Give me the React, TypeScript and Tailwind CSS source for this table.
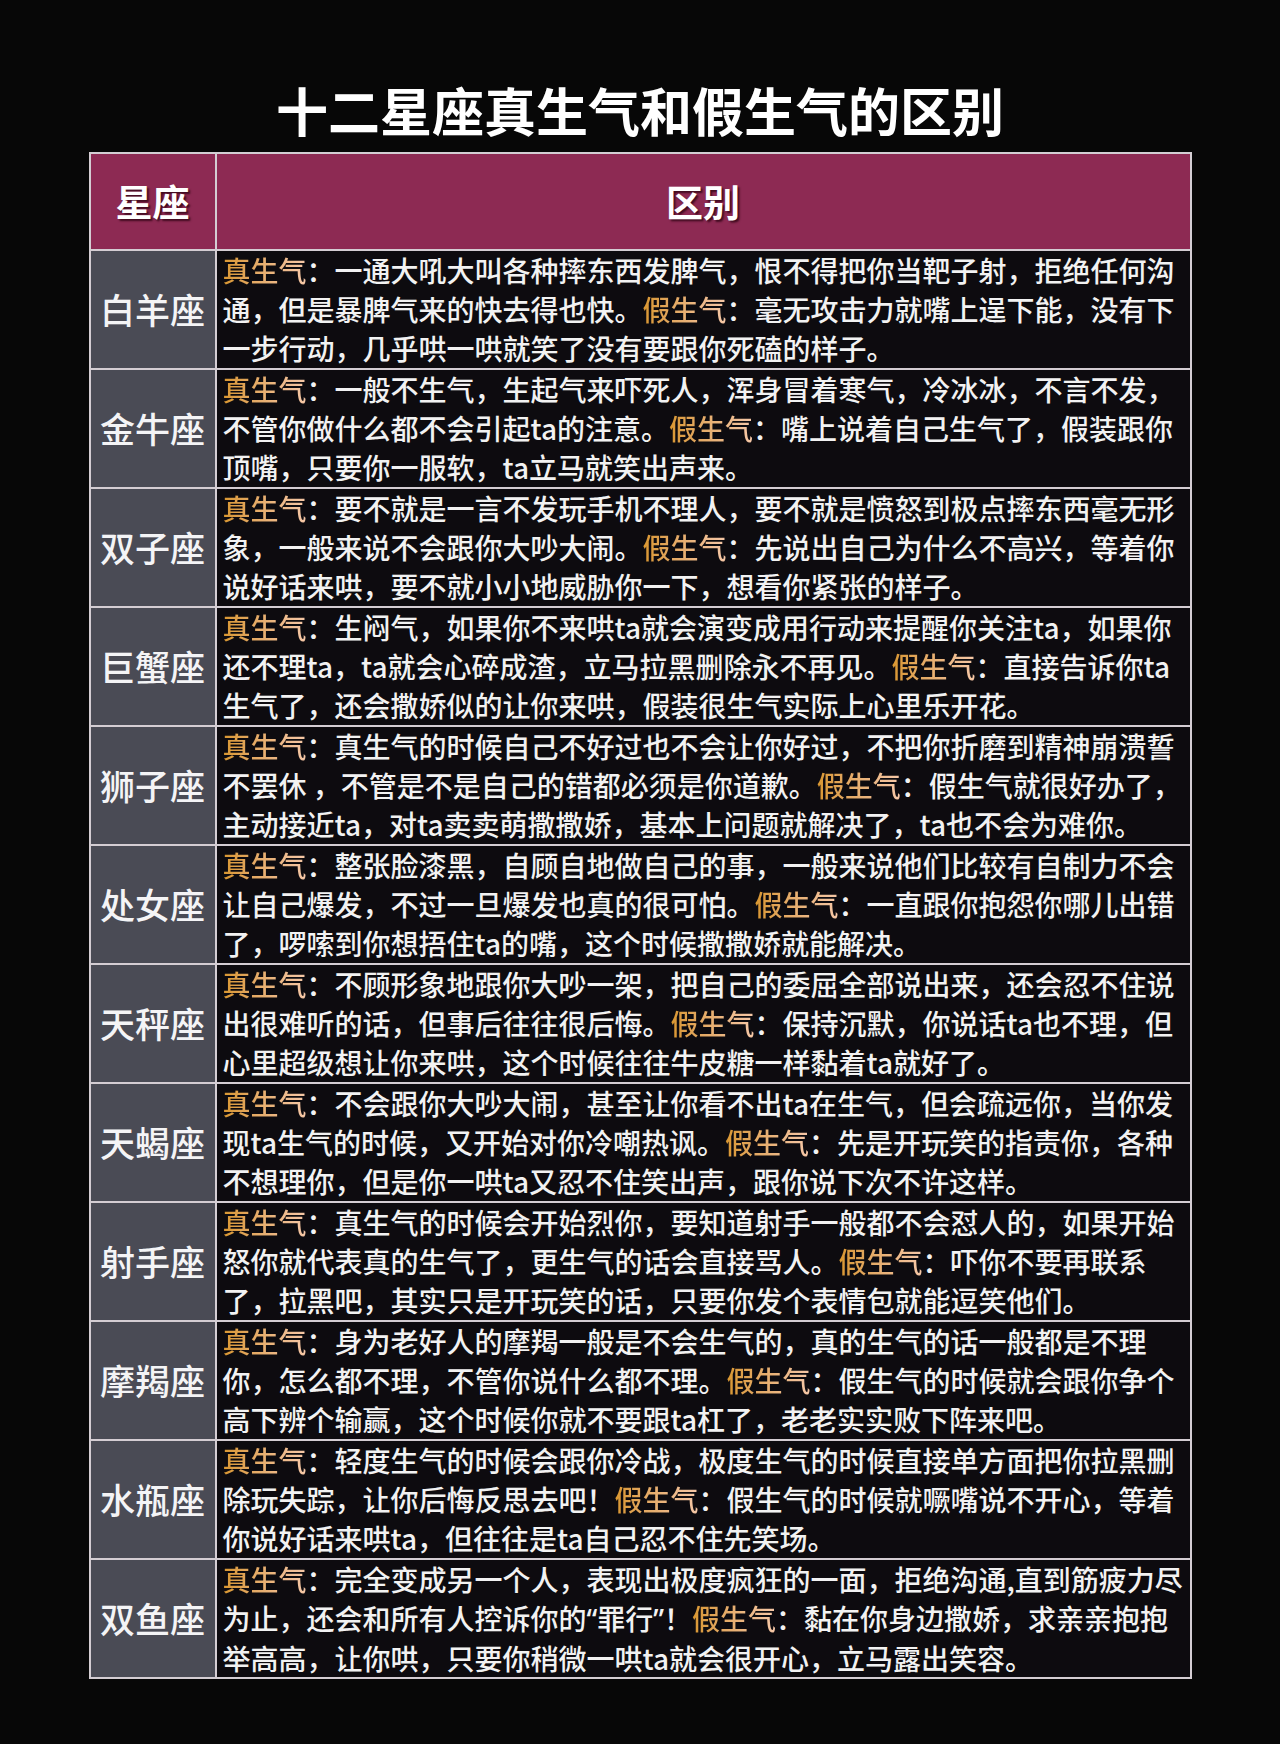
import type { ReactElement } from 'react'

type SignRow = {
  name: string
  lines: string[]
}

const SIGNS: SignRow[] = [
  {
    name: '白羊座',
    lines: [
      '真生气：一通大吼大叫各种摔东西发脾气，恨不得把你当靶子射，拒绝任何沟',
      '通，但是暴脾气来的快去得也快。假生气：毫无攻击力就嘴上逞下能，没有下',
      '一步行动，几乎哄一哄就笑了没有要跟你死磕的样子。'
    ]
  },
  {
    name: '金牛座',
    lines: [
      '真生气：一般不生气，生起气来吓死人，浑身冒着寒气，冷冰冰，不言不发，',
      '不管你做什么都不会引起ta的注意。假生气：嘴上说着自己生气了，假装跟你',
      '顶嘴，只要你一服软，ta立马就笑出声来。'
    ]
  },
  {
    name: '双子座',
    lines: [
      '真生气：要不就是一言不发玩手机不理人，要不就是愤怒到极点摔东西毫无形',
      '象，一般来说不会跟你大吵大闹。假生气：先说出自己为什么不高兴，等着你',
      '说好话来哄，要不就小小地威胁你一下，想看你紧张的样子。'
    ]
  },
  {
    name: '巨蟹座',
    lines: [
      '真生气：生闷气，如果你不来哄ta就会演变成用行动来提醒你关注ta，如果你',
      '还不理ta，ta就会心碎成渣，立马拉黑删除永不再见。假生气：直接告诉你ta',
      '生气了，还会撒娇似的让你来哄，假装很生气实际上心里乐开花。'
    ]
  },
  {
    name: '狮子座',
    lines: [
      '真生气：真生气的时候自己不好过也不会让你好过，不把你折磨到精神崩溃誓',
      '不罢休 ，不管是不是自己的错都必须是你道歉。假生气：假生气就很好办了，',
      '主动接近ta，对ta卖卖萌撒撒娇，基本上问题就解决了，ta也不会为难你。'
    ]
  },
  {
    name: '处女座',
    lines: [
      '真生气：整张脸漆黑，自顾自地做自己的事，一般来说他们比较有自制力不会',
      '让自己爆发，不过一旦爆发也真的很可怕。假生气：一直跟你抱怨你哪儿出错',
      '了，啰嗦到你想捂住ta的嘴，这个时候撒撒娇就能解决。'
    ]
  },
  {
    name: '天秤座',
    lines: [
      '真生气：不顾形象地跟你大吵一架，把自己的委屈全部说出来，还会忍不住说',
      '出很难听的话，但事后往往很后悔。假生气：保持沉默，你说话ta也不理，但',
      '心里超级想让你来哄，这个时候往往牛皮糖一样黏着ta就好了。'
    ]
  },
  {
    name: '天蝎座',
    lines: [
      '真生气：不会跟你大吵大闹，甚至让你看不出ta在生气，但会疏远你，当你发',
      '现ta生气的时候，又开始对你冷嘲热讽。假生气：先是开玩笑的指责你，各种',
      '不想理你，但是你一哄ta又忍不住笑出声，跟你说下次不许这样。'
    ]
  },
  {
    name: '射手座',
    lines: [
      '真生气：真生气的时候会开始烈你，要知道射手一般都不会怼人的，如果开始',
      '怒你就代表真的生气了，更生气的话会直接骂人。假生气：吓你不要再联系',
      '了，拉黑吧，其实只是开玩笑的话，只要你发个表情包就能逗笑他们。'
    ]
  },
  {
    name: '摩羯座',
    lines: [
      '真生气：身为老好人的摩羯一般是不会生气的，真的生气的话一般都是不理',
      '你，怎么都不理，不管你说什么都不理。假生气：假生气的时候就会跟你争个',
      '高下辨个输赢，这个时候你就不要跟ta杠了，老老实实败下阵来吧。'
    ]
  },
  {
    name: '水瓶座',
    lines: [
      '真生气：轻度生气的时候会跟你冷战，极度生气的时候直接单方面把你拉黑删',
      '除玩失踪，让你后悔反思去吧！假生气：假生气的时候就噘嘴说不开心，等着',
      '你说好话来哄ta，但往往是ta自己忍不住先笑场。'
    ]
  },
  {
    name: '双鱼座',
    lines: [
      '真生气：完全变成另一个人，表现出极度疯狂的一面，拒绝沟通,直到筋疲力尽',
      '为止，还会和所有人控诉你的“罪行”！假生气：黏在你身边撒娇，求亲亲抱抱',
      '举高高，让你哄，只要你稍微一哄ta就会很开心，立马露出笑容。'
    ]
  }
]

// curly quotes are narrow in the picture, so they get a latin font
function renderPlain(text: string, key: number): ReactElement {
  return (
    <span key={key}>
      {text.split(/([“”])/u).map((piece, index) =>
        index % 2 === 1 ? (
          <span key={index} className="font-['Noto_Sans',sans-serif]">
            {piece}
          </span>
        ) : (
          piece
        )
      )}
    </span>
  )
}

// only the label right before a colon gets the gold colour
function renderLine(line: string): ReactElement[] {
  return line.split(/((?:真|假)生气(?=：))/u).map((part, index) =>
    index % 2 === 1 ? (
      <span
        key={index}
        className="bg-linear-to-r from-[#d9972f] to-[#f6c8a8] bg-clip-text text-transparent"
      >
        {part}
      </span>
    ) : (
      renderPlain(part, index)
    )
  )
}

function SignRowCells({ sign }: { sign: SignRow }): ReactElement {
  return (
    <>
      <div className="flex h-[117px] items-center justify-center bg-[#4a4b55] text-[35px] font-medium text-[#f4f4f6]">
        {sign.name}
      </div>
      <div className="flex h-[117px] flex-col overflow-hidden bg-[#0d0b0f] pl-[6px] text-[28px] font-medium leading-[39px] text-[#f2f2f2]">
        {sign.lines.map((line, index) => (
          <div key={index} className="whitespace-nowrap">
            {renderLine(line)}
          </div>
        ))}
      </div>
    </>
  )
}

export default function App(): ReactElement {
  return (
    <div className="min-h-[1744px] bg-[#070707] pt-[84px] font-['Noto_Sans_CJK_SC','Noto_Sans',sans-serif]">
      <h1 className="mb-[16px] h-[52px] text-center text-[52px] font-bold leading-none text-white">
        十二星座真生气和假生气的区别
      </h1>

      <div className="mx-auto grid w-[1103px] grid-cols-[124px_1fr] gap-[2px] bg-[#d4cdd3] p-[2px]">
        <div className="flex h-[95px] items-center justify-center bg-[#8d2a53] text-[37px] font-bold text-white [text-shadow:2px_2px_2px_rgba(40,0,15,0.75)]">
          星座
        </div>
        <div className="flex h-[95px] items-center justify-center bg-[#8d2a53] text-[37px] font-bold text-white [text-shadow:2px_2px_2px_rgba(40,0,15,0.75)]">
          区别
        </div>
        {SIGNS.map((sign) => (
          <SignRowCells key={sign.name} sign={sign} />
        ))}
      </div>
    </div>
  )
}
